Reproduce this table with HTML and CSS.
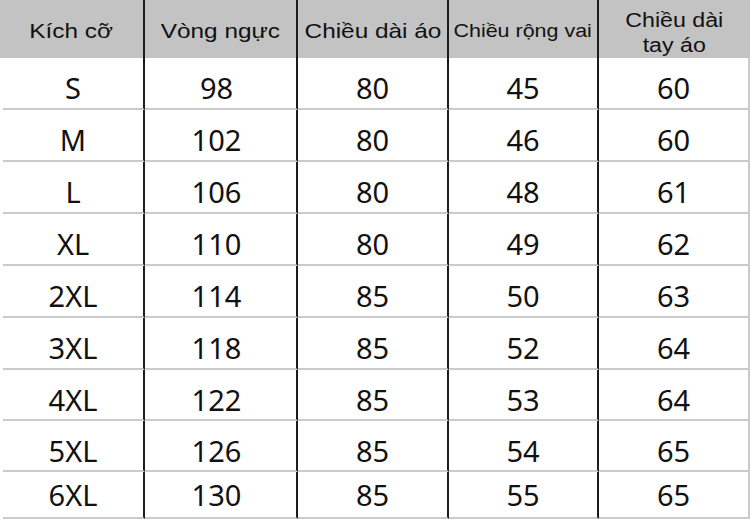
FILE: index.html
```html
<!DOCTYPE html>
<html lang="vi">
<head>
<meta charset="utf-8">
<title>Bảng size</title>
<link rel="stylesheet" href="styles.css">
</head>
<body>
<div class="table">
  <div class="row head">
    <div class="cell"><span class="ht">Kích cỡ</span></div>
    <div class="cell"><span class="ht">Vòng ngực</span></div>
    <div class="cell"><span class="ht">Chiều dài áo</span></div>
    <div class="cell"><span class="ht small">Chiều rộng vai</span></div>
    <div class="cell two"><span class="ht">Chiều dài<br>tay áo</span></div>
  </div>
  <div class="row"><div class="cell">S</div><div class="cell">98</div><div class="cell">80</div><div class="cell">45</div><div class="cell">60</div></div>
  <div class="row"><div class="cell">M</div><div class="cell">102</div><div class="cell">80</div><div class="cell">46</div><div class="cell">60</div></div>
  <div class="row"><div class="cell">L</div><div class="cell">106</div><div class="cell">80</div><div class="cell">48</div><div class="cell">61</div></div>
  <div class="row"><div class="cell">XL</div><div class="cell">110</div><div class="cell">80</div><div class="cell">49</div><div class="cell">62</div></div>
  <div class="row"><div class="cell">2XL</div><div class="cell">114</div><div class="cell">85</div><div class="cell">50</div><div class="cell">63</div></div>
  <div class="row"><div class="cell">3XL</div><div class="cell">118</div><div class="cell">85</div><div class="cell">52</div><div class="cell">64</div></div>
  <div class="row r51"><div class="cell">4XL</div><div class="cell">122</div><div class="cell">85</div><div class="cell">53</div><div class="cell">64</div></div>
  <div class="row r51"><div class="cell">5XL</div><div class="cell">126</div><div class="cell">85</div><div class="cell">54</div><div class="cell">65</div></div>
  <div class="row last"><div class="cell">6XL</div><div class="cell">130</div><div class="cell">85</div><div class="cell">55</div><div class="cell">65</div></div>
</div>
</body>
</html>
```
FILE: styles.css
```css
html, body {
  margin: 0;
  padding: 0;
  background: #ffffff;
  overflow: hidden;
}

.table {
  width: 750px;
  height: 519px;
  display: flex;
  flex-direction: column;
}

.row {
  display: grid;
  grid-template-columns: 145px 153px 151px 150px 151px;
  height: 52px;
  flex: none;
}

.row.r51 { height: 51px; }
.row.last { height: 47px; }

.cell {
  box-sizing: border-box;
  display: flex;
  align-items: center;
  justify-content: center;
  border-right: 2px solid #1c1c1c;
  border-bottom: 2px solid #cbcbcb;
  font-family: "Noto Sans", sans-serif;
  font-size: 29px;
  color: #111111;
  padding-top: 9px;
  white-space: nowrap;
}

.row .cell:first-child {
  margin-left: 3px;
}

.row .cell:nth-child(2) {
  padding-right: 8px;
}

.row .cell:last-child {
  border-right-color: #cbcbcb;
}

.row.last .cell {
  padding-top: 0;
}

.row.head {
  height: 58px;
  background: #c3c3c3;
}

.row.head .cell {
  border-bottom: none;
  padding-top: 3px;
  padding-right: 0;
  font-family: "Liberation Sans", Arial, sans-serif;
  font-size: 21px;
}

.row.head .cell:first-child {
  margin-left: 0;
}

.row.head .cell:last-child {
  border-right: none;
}

.ht {
  display: inline-block;
  transform: scaleX(1.16);
  text-align: center;
}

.ht.small {
  font-size: 18.5px;
}

.row.head .cell.two {
  font-size: 20px;
  line-height: 25px;
  padding-top: 8px;
}
```
